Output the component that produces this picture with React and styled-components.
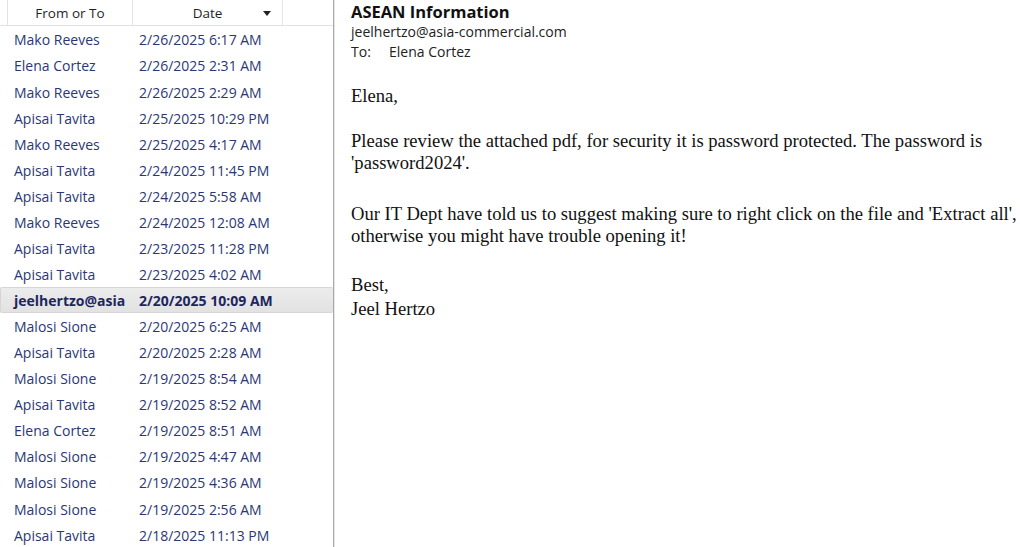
import React from 'react';
import styled, {createGlobalStyle} from 'styled-components';

const GlobalStyle = createGlobalStyle`
    html, body {
        margin: 0;
        padding: 0;
        background: #ffffff;
        overflow: hidden;
    }
`;

const messages = [
    {who: 'Mako Reeves', date: '2/26/2025 6:17 AM'},
    {who: 'Elena Cortez', date: '2/26/2025 2:31 AM'},
    {who: 'Mako Reeves', date: '2/26/2025 2:29 AM'},
    {who: 'Apisai Tavita', date: '2/25/2025 10:29 PM'},
    {who: 'Mako Reeves', date: '2/25/2025 4:17 AM'},
    {who: 'Apisai Tavita', date: '2/24/2025 11:45 PM'},
    {who: 'Apisai Tavita', date: '2/24/2025 5:58 AM'},
    {who: 'Mako Reeves', date: '2/24/2025 12:08 AM'},
    {who: 'Apisai Tavita', date: '2/23/2025 11:28 PM'},
    {who: 'Apisai Tavita', date: '2/23/2025 4:02 AM'},
    {who: 'jeelhertzo@asia', date: '2/20/2025 10:09 AM', selected: true},
    {who: 'Malosi Sione', date: '2/20/2025 6:25 AM'},
    {who: 'Apisai Tavita', date: '2/20/2025 2:28 AM'},
    {who: 'Malosi Sione', date: '2/19/2025 8:54 AM'},
    {who: 'Apisai Tavita', date: '2/19/2025 8:52 AM'},
    {who: 'Elena Cortez', date: '2/19/2025 8:51 AM'},
    {who: 'Malosi Sione', date: '2/19/2025 4:47 AM'},
    {who: 'Malosi Sione', date: '2/19/2025 4:36 AM'},
    {who: 'Malosi Sione', date: '2/19/2025 2:56 AM'},
    {who: 'Apisai Tavita', date: '2/18/2025 11:13 PM'},
];

const Window = styled.div`
    display: flex;
    width: 1020px;
    height: 547px;
    overflow: hidden;
    font-family: "Open Sans", "Noto Sans", sans-serif;
`;

const ListPane = styled.div`
    width: 334px;
    box-sizing: border-box;
    flex-shrink: 0;
    border-right: 1px solid #a9a9a9;
    box-shadow: 1px 0 0 #e6e6e6;
    display: flex;
    flex-direction: column;
`;

const HeaderRow = styled.div`
    display: flex;
    height: 26px;
    box-sizing: border-box;
    border-bottom: 1px solid #e2e2e2;
    background: #fff;
`;

const HeaderCell = styled.div`
    width: ${p => p.w}px;
    box-sizing: border-box;
    flex-shrink: 0;
    border-right: ${p => p.last ? 'none' : '1px solid #e4e4e4'};
    display: flex;
    align-items: center;
    justify-content: center;
    position: relative;
    padding-top: 2px;
    font-size: 13.5px;
    color: #1f1f1f;
`;

const SortArrow = styled.span`
    position: absolute;
    right: 11px;
    top: 11px;
    width: 0;
    height: 0;
    border-left: 4px solid transparent;
    border-right: 4px solid transparent;
    border-top: 5px solid #222;
`;

const Row = styled.div`
    display: flex;
    align-items: center;
    height: 26.16px;
    box-sizing: border-box;
    padding-top: 2px;
    color: ${p => p.selected ? '#1d2660' : '#2b3775'};
    font-weight: ${p => p.selected ? 700 : 400};
    background: ${p => p.selected ? 'linear-gradient(#ececec, #e2e2e2)' : 'transparent'};
    border: 1px solid ${p => p.selected ? '#d6d6d6' : 'transparent'};
    border-right: none;
    border-radius: 2px;
    font-size: 14px;
`;

const WhoCell = styled.div`
    width: 112px;
    padding-left: 13px;
    flex-shrink: 0;
    overflow: hidden;
    white-space: nowrap;
    text-overflow: clip;
`;

const DateCell = styled.div`
    width: 136px;
    padding-left: 13px;
    flex-shrink: 0;
    overflow: hidden;
    white-space: nowrap;
    text-overflow: clip;
`;

const ReadingPane = styled.div`
    flex: 1;
    padding: 1px 0 0 16px;
    margin-left: 1px;
`;

const Subject = styled.div`
    font-weight: 700;
    font-size: 16.5px;
    color: #111;
    line-height: 21px;
`;

const Meta = styled.div`
    font-size: 14px;
    color: #222;
    line-height: 20px;
    display: flex;
`;

const MetaLabel = styled.span`
    width: 38px;
`;

const Body = styled.div`
    margin-top: 23px;
    font-family: "Liberation Serif", "Times New Roman", serif;
    font-size: 18.6px;
    line-height: 22.5px;
    color: #111;
    white-space: nowrap;
`;

const Para = styled.p`
    margin: 0 0 ${p => p.gap}px 0;
    line-height: ${p => p.lh || 22.5}px;
`;

export default function App() {
    return (
        <>
            <GlobalStyle/>
            <Window>
                <ListPane>
                    <HeaderRow>
                        <HeaderCell w={8}/>
                        <HeaderCell w={125}>From or To</HeaderCell>
                        <HeaderCell w={150}>Date<SortArrow/></HeaderCell>
                        <HeaderCell w={50} last/>
                    </HeaderRow>
                    {messages.map((m, i) => (
                        <Row key={i} selected={m.selected}>
                            <WhoCell>{m.who}</WhoCell>
                            <DateCell>{m.date}</DateCell>
                        </Row>
                    ))}
                </ListPane>
                <ReadingPane>
                    <Subject>ASEAN Information</Subject>
                    <Meta>jeelhertzo@asia-commercial.com</Meta>
                    <Meta><MetaLabel>To:</MetaLabel>Elena Cortez</Meta>
                    <Body>
                        <Para gap={22}>Elena,</Para>
                        <Para gap={28}>Please review the attached pdf, for security it is password protected. The password is<br/>'password2024'.</Para>
                        <Para gap={25}>Our IT Dept have told us to suggest making sure to right click on the file and 'Extract all',<br/>otherwise you might have trouble opening it!</Para>
                        <Para gap={0} lh={24}>Best,<br/>Jeel Hertzo</Para>
                    </Body>
                </ReadingPane>
            </Window>
        </>
    );
}
